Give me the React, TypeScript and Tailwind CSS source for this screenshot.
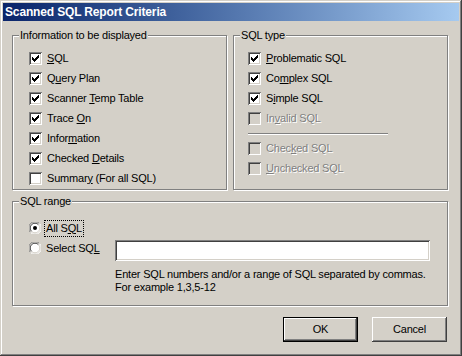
import React from 'react';

const raised =
  'shadow-[inset_-1px_-1px_#404040,inset_1px_1px_#ffffff,inset_-2px_-2px_#808080,inset_2px_2px_#d4d0c8]';
const sunken =
  'shadow-[inset_1px_1px_#808080,inset_-1px_-1px_#ffffff,inset_2px_2px_#404040,inset_-2px_-2px_#d4d0c8]';
const etched = 'border border-[#808080] shadow-[1px_1px_0_#ffffff,inset_1px_1px_0_#ffffff]';
const disabledText = 'text-[#808080] [text-shadow:1px_1px_0_#ffffff]';

function CheckMark() {
  return (
    <svg width="7" height="7" viewBox="0 0 7 7" shapeRendering="crispEdges">
      <path
        d="M0 2h1v3H0z M1 3h1v3H1z M2 4h1v3H2z M3 3h1v3H3z M4 2h1v3H4z M5 1h1v3H5z M6 0h1v3H6z"
        fill="#000"
      />
    </svg>
  );
}

function CheckBox({ checked, disabled }: { checked?: boolean; disabled?: boolean }) {
  return (
    <span
      className={`flex items-center justify-center w-[13px] h-[13px] shrink-0 ${sunken} ${
        disabled ? 'bg-[#d4d0c8]' : 'bg-white'
      }`}
    >
      {checked && <CheckMark />}
    </span>
  );
}

function Radio({ checked }: { checked?: boolean }) {
  return (
    <svg width="12" height="12" viewBox="0 0 12 12" className="shrink-0">
      <circle cx="6" cy="6" r="5.5" fill="#fff" />
      <path d="M1.5 10.5 A6.36 6.36 0 0 1 10.5 1.5" stroke="#808080" fill="none" strokeWidth="1" />
      <path d="M10.5 1.5 A6.36 6.36 0 0 1 1.5 10.5" stroke="#ffffff" fill="none" strokeWidth="1" />
      <path d="M2.6 9.4 A4.8 4.8 0 0 1 9.4 2.6" stroke="#404040" fill="none" strokeWidth="1" />
      <path d="M9.4 2.6 A4.8 4.8 0 0 1 2.6 9.4" stroke="#d4d0c8" fill="none" strokeWidth="1" />
      {checked && <circle cx="6" cy="6" r="2" fill="#000" />}
    </svg>
  );
}

function Row({
  checked,
  disabled,
  children,
}: {
  checked?: boolean;
  disabled?: boolean;
  children: React.ReactNode;
}) {
  return (
    <div className="flex items-center h-[20px] gap-[5px]">
      <CheckBox checked={checked} disabled={disabled} />
      <span className={disabled ? disabledText : ''}>{children}</span>
    </div>
  );
}

function Group({
  label,
  className,
  children,
}: {
  label: string;
  className: string;
  children: React.ReactNode;
}) {
  return (
    <div className={`relative ${etched} ${className}`}>
      <span className="absolute -top-[7px] left-[6px] px-[1px] bg-[#d4d0c8] leading-[13px]">
        {label}
      </span>
      {children}
    </div>
  );
}

export default function App() {
  return (
    <div
      className={`w-[462px] h-[356px] bg-[#d4d0c8] p-[3px] flex flex-col text-[11px] tracking-[-0.2px] leading-[13px] text-black font-['Liberation_Sans',Arial,sans-serif] shadow-[inset_-1px_-1px_#404040,inset_1px_1px_#d4d0c8,inset_-2px_-2px_#808080,inset_2px_2px_#ffffff]`}
    >
      <div className="h-[18px] flex items-center pl-[2px] bg-gradient-to-r from-[#0a246a] to-[#a6caf0] text-white font-bold text-[12px] tracking-[-0.15px]">
        Scanned SQL Report Criteria
      </div>

      <div className="ml-[9px] w-[436px] flex flex-col">
        <div className="mt-[14px] flex gap-[6px]">
          <Group label="Information to be displayed" className="w-[215px] h-[155px] pt-[12px] pl-[16px]">
            <Row checked>
              <u>S</u>QL
            </Row>
            <Row checked>
              Q<u>u</u>ery Plan
            </Row>
            <Row checked>
              Scanner <u>T</u>emp Table
            </Row>
            <Row checked>
              Trace <u>O</u>n
            </Row>
            <Row checked>
              Infor<u>m</u>ation
            </Row>
            <Row checked>
              Checked <u>D</u>etails
            </Row>
            <Row>
              Summar<u>y</u> (For all SQL)
            </Row>
          </Group>

          <Group label="SQL type" className="w-[215px] h-[155px] pt-[12px] pl-[14px]">
            <Row checked>
              <u>P</u>roblematic SQL
            </Row>
            <Row checked>
              Co<u>m</u>plex SQL
            </Row>
            <Row checked>
              S<u>i</u>mple SQL
            </Row>
            <Row disabled>
              In<u>v</u>alid SQL
            </Row>
            <div className="mt-[5px] w-[140px] h-[2px] border-t border-[#808080] border-b border-b-white" />
            <div className="mt-[3px]">
              <Row disabled>
                Chec<u>k</u>ed SQL
              </Row>
              <Row disabled>
                <u>U</u>nchecked SQL
              </Row>
            </div>
          </Group>
        </div>

        <Group label="SQL range" className="mt-[11px] w-[436px] h-[105px] pt-[16px] pl-[16px]">
          <div className="flex items-center h-[20px]">
            <div className="w-[86px] flex items-center gap-[3px]">
              <Radio checked />
              <span className="border border-dotted border-black px-[1px] leading-[15px]">
                All S<u>Q</u>L
              </span>
            </div>
          </div>
          <div className="flex items-start">
            <div className="w-[86px] h-[20px] flex items-center gap-[5px]">
              <Radio />
              <span>
                Select SQ<u>L</u>
              </span>
            </div>
            <div className={`mt-[2px] w-[315px] h-[21px] bg-white ${sunken}`} />
          </div>
          <div className="ml-[86px] mt-[7px]">
            <div>Enter SQL numbers and/or a range of SQL separated by commas.</div>
            <div>For example 1,3,5-12</div>
          </div>
        </Group>

        <div className="mt-[11px] mr-[1px] flex justify-end gap-[14px]">
          <button className="w-[75px] h-[25px] border border-black bg-[#d4d0c8] flex items-center justify-center">
            <span className={`w-full h-full flex items-center justify-center ${raised}`}>OK</span>
          </button>
          <button
            className={`w-[75px] h-[25px] bg-[#d4d0c8] flex items-center justify-center ${raised}`}
          >
            Cancel
          </button>
        </div>
      </div>
    </div>
  );
}
